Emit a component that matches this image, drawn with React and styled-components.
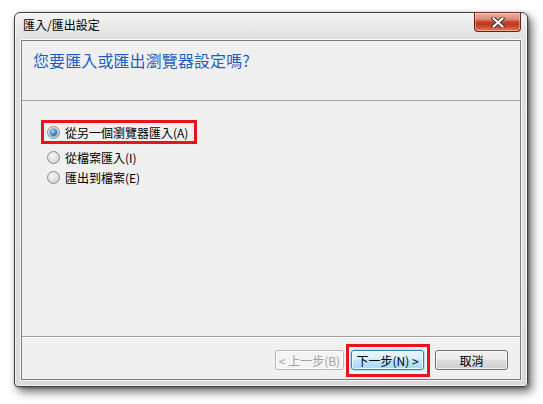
import React from "react";
import styled, { createGlobalStyle } from "styled-components";

const GlobalStyle = createGlobalStyle`
  html, body { margin: 0; padding: 0; background: #ffffff; }
  body {
    font-family: "Noto Sans CJK TC", "Noto Sans", "Liberation Sans", sans-serif;
    font-size: 12px;
    color: #000;
  }
`;

const Page = styled.div`
  padding: 12px 0 0 14px;
  width: 543px;
  height: 404px;
  box-sizing: border-box;
`;

const Window = styled.div`
  width: 514px;
  height: 375px;
  box-sizing: border-box;
  border: 1px solid #3f3f3f;
  border-radius: 6px 6px 4px 4px;
  background: linear-gradient(to bottom, #f5f5f5 0px, #e8e8e8 14px, #e0e0e0 28px, #dadada 100%);
  box-shadow: inset 0 0 0 1px rgba(255, 255, 255, 0.7), 4px 5px 10px rgba(0, 0, 0, 0.55),
    1px 1px 3px rgba(0, 0, 0, 0.35);
  padding: 0 6px 6px 6px;
  display: flex;
  flex-direction: column;
`;

const TitleBar = styled.div`
  height: 27px;
  display: flex;
  align-items: flex-start;
`;

const TitleText = styled.div`
  margin: 5px 0 0 2px;
  font-size: 12px;
  line-height: 14px;
  color: #000;
`;

const CloseButton = styled.div`
  margin-left: auto;
  margin-top: -1px;
  width: 47px;
  height: 20px;
  box-sizing: border-box;
  border: 1px solid #6a2115;
  border-top-color: #7a3a30;
  border-radius: 0 0 4px 4px;
  background: linear-gradient(
    to bottom,
    #eab3a5 0%,
    #dc8a76 35%,
    #c43f26 50%,
    #c3391e 65%,
    #d8664a 90%,
    #e48a6c 100%
  );
  box-shadow: inset 0 0 0 1px rgba(255, 220, 210, 0.45);
  display: flex;
  align-items: center;
  justify-content: center;
`;

const Content = styled.div`
  flex: 1;
  border: 1px solid #7d7d7d;
  background: #f0f0f0;
  display: flex;
  flex-direction: column;
  box-shadow: 0 0 0 1px rgba(255, 255, 255, 0.8);
`;

const Header = styled.div`
  border-bottom: 1px solid #a0a0a0;
  padding: 9px 0 0 11px;
  box-sizing: content-box;
  height: 50px;
`;

const Instruction = styled.div`
  font-size: 16px;
  line-height: 20px;
  color: #1c5fc0;
  letter-spacing: 0.1px;
`;

const Body = styled.div`
  flex: 1;
  padding: 25px 0 0 25px;
  display: flex;
  flex-direction: column;
  align-items: flex-start;
`;

const OptionRow = styled.div`
  position: relative;
  display: flex;
  align-items: center;
  height: 13px;
  margin-top: ${(p) => p.$gap}px;
  gap: 5px;
  ${(p) =>
    p.$marked &&
    `
    &::after {
      content: "";
      position: absolute;
      left: -6px;
      top: -6px;
      width: 156px;
      height: 24px;
      box-sizing: border-box;
      border: 3px solid #e8141c;
    }
  `}
`;

const Radio = styled.span`
  width: 13px;
  height: 13px;
  box-sizing: border-box;
  border-radius: 50%;
  border: 1px solid #8a8c8e;
  background: radial-gradient(circle at 40% 35%, #f6f6f6 0%, #e4e4e4 45%, #c4c5c6 100%);
  display: flex;
  align-items: center;
  justify-content: center;
  flex: none;
`;

const RadioDot = styled.span`
  width: 7px;
  height: 7px;
  border-radius: 50%;
  background: radial-gradient(circle at 40% 35%, #b8e6ff 0%, #3d9be0 40%, #0e4f8e 100%);
  box-shadow: 0 0 0 1px rgba(30, 70, 120, 0.35);
`;

const Label = styled.span`
  font-size: 12px;
  line-height: 13px;
  color: #000;
  white-space: nowrap;
`;

const Footer = styled.div`
  border-top: 1px solid #a0a0a0;
  box-shadow: inset 0 1px 0 #ffffff;
  display: flex;
  justify-content: flex-end;
  align-items: flex-start;
  padding: 13px 12px 0 0;
  box-sizing: border-box;
  height: 43px;
`;

const Button = styled.div`
  position: relative;
  width: ${(p) => p.$w}px;
  height: 20px;
  margin-left: ${(p) => p.$ml}px;
  box-sizing: border-box;
  border-radius: 3px;
  display: flex;
  align-items: center;
  justify-content: center;
  font-size: 12px;
  white-space: nowrap;
  border: 1px solid ${(p) => (p.$disabled ? "#b5b9bc" : p.$primary ? "#3c7fb1" : "#707070")};
  color: ${(p) => (p.$disabled ? "#a3a3a3" : "#000")};
  background: ${(p) =>
    p.$disabled
      ? "#f4f4f4"
      : p.$primary
      ? "linear-gradient(to bottom, #eaf6fd 0%, #d9f0fc 45%, #bee6fd 50%, #a7d9f5 100%)"
      : "linear-gradient(to bottom, #f2f2f2 0%, #ebebeb 45%, #dddddd 50%, #cfcfcf 100%)"};
  box-shadow: ${(p) =>
    p.$primary ? "inset 0 0 0 1px rgba(255,255,255,0.8), 0 0 0 1px rgba(72,200,255,0.35)" : "inset 0 0 0 1px rgba(255,255,255,0.7)"};
  ${(p) =>
    p.$marked &&
    `
    &::after {
      content: "";
      position: absolute;
      left: -6px;
      top: -7px;
      width: 84px;
      height: 33px;
      box-sizing: border-box;
      border: 3px solid #e8141c;
    }
  `}
`;

function CloseGlyph() {
  return (
    <svg width="14" height="11" viewBox="0 0 14 11">
      <path d="M2.5 1.5 L11.5 9.5 M11.5 1.5 L2.5 9.5" stroke="#3b3b3b" strokeWidth="4" strokeLinecap="square" />
      <path d="M2.5 1.5 L11.5 9.5 M11.5 1.5 L2.5 9.5" stroke="#ffffff" strokeWidth="2" strokeLinecap="square" />
    </svg>
  );
}

const options = [
  { label: "從另一個瀏覽器匯入(A)", checked: true, gap: 0 },
  { label: "從檔案匯入(I)", checked: false, gap: 12 },
  { label: "匯出到檔案(E)", checked: false, gap: 7 },
];

export default function App() {
  return (
    <>
      <GlobalStyle />
      <Page>
        <Window>
          <TitleBar>
            <TitleText>匯入/匯出設定</TitleText>
            <CloseButton>
              <CloseGlyph />
            </CloseButton>
          </TitleBar>
          <Content>
            <Header>
              <Instruction>您要匯入或匯出瀏覽器設定嗎?</Instruction>
            </Header>
            <Body>
              {options.map((o, i) => (
                <OptionRow key={i} $gap={o.gap} $marked={o.checked}>
                  <Radio>{o.checked && <RadioDot />}</Radio>
                  <Label>{o.label}</Label>
                </OptionRow>
              ))}
            </Body>
            <Footer>
              <Button $w={69} $ml={0} $disabled>
                &lt; 上一步(B)
              </Button>
              <Button $w={73} $ml={7} $primary $marked>
                下一步(N) &gt;
              </Button>
              <Button $w={73} $ml={11}>
                取消
              </Button>
            </Footer>
          </Content>
        </Window>
      </Page>
    </>
  );
}
